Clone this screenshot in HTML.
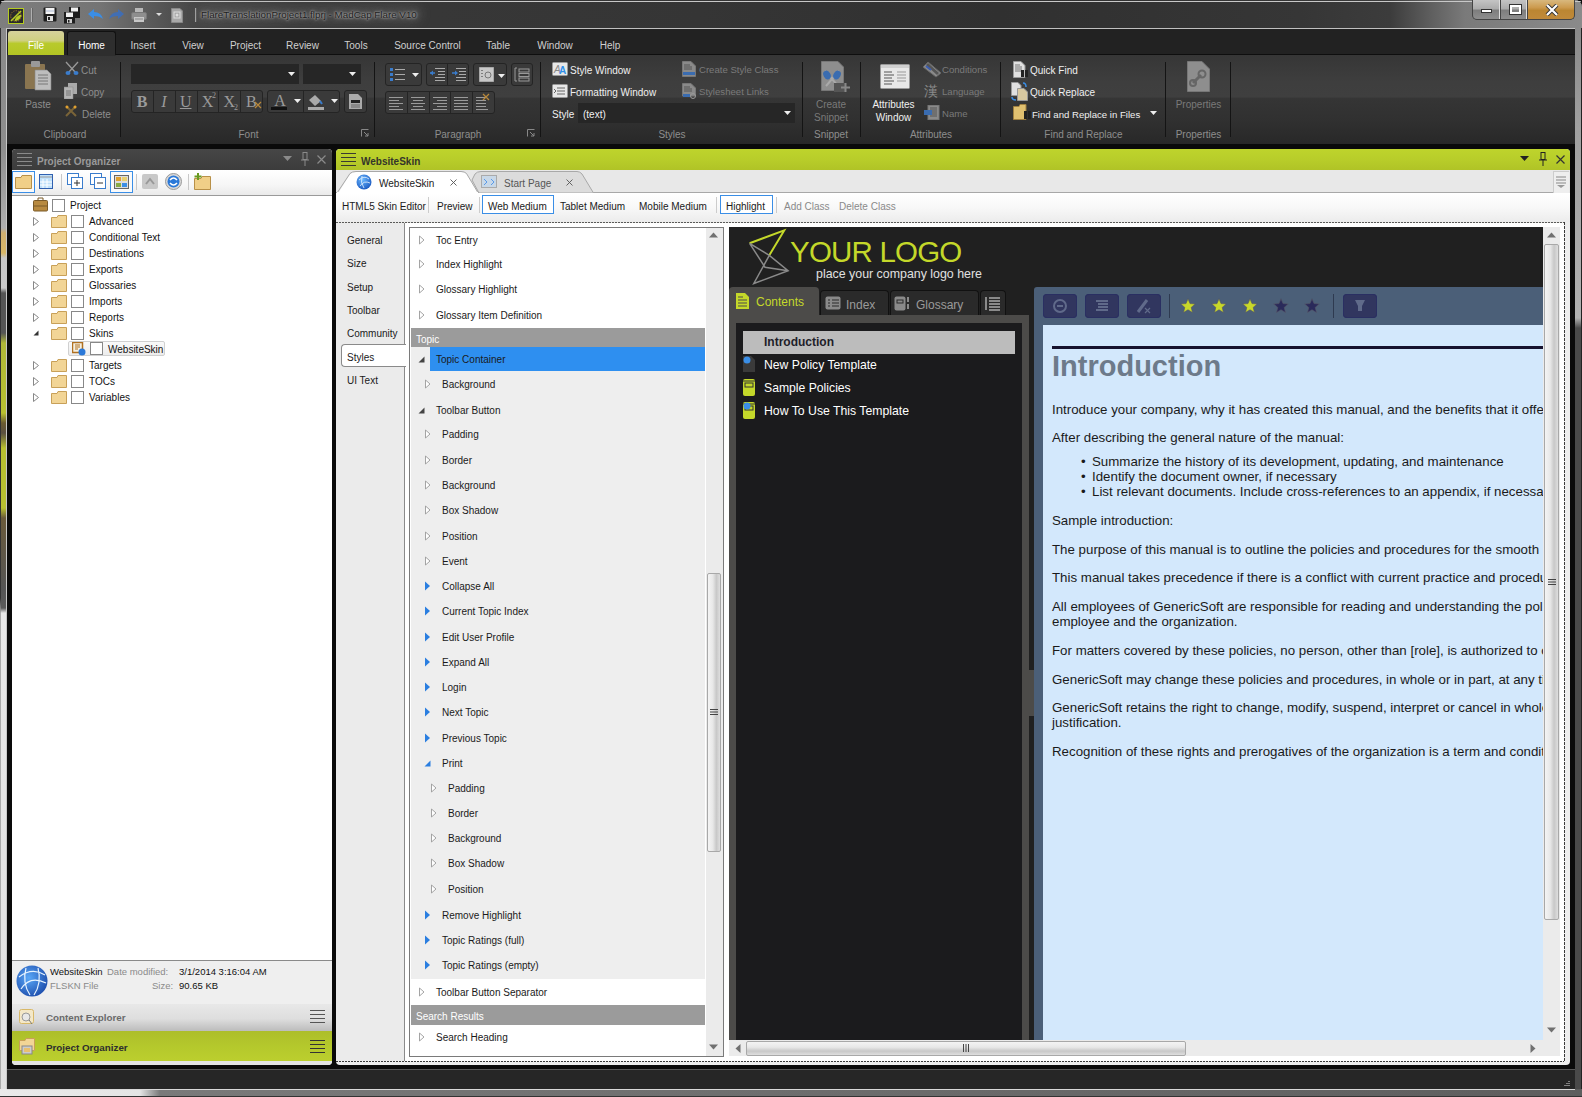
<!DOCTYPE html>
<html><head><meta charset="utf-8">
<style>
*{margin:0;padding:0;box-sizing:border-box}
html,body{width:1582px;height:1097px;overflow:hidden;background:#0c0c0c;font-family:"Liberation Sans",sans-serif}
.a{position:absolute}
.t{position:absolute;white-space:nowrap;line-height:1}
</style></head>
<body>
<div class="a" style="left:0px;top:0px;width:1582px;height:1097px;border-radius:7px 7px 0 0;background:#8a8a8a"></div>
<div class="a" style="left:1px;top:28px;width:6px;height:1069px;background:linear-gradient(180deg,#8a8a8a 0,#8e8e8e 120px,#b0b0b0 200px,#d0b070 205px,#d8b868 225px,#c8c8c8 230px,#cacaca 260px,#555 265px,#555 305px,#b0b838 315px,#b8c030 385px,#6a5a30 395px,#5a5040 405px,#b8c030 420px,#b8c030 480px,#6a5a3a 490px,#555 560px,#5a5a5a 580px,#e8e8e8 585px,#e0e0e0 100%)"></div>
<div class="a" style="left:0px;top:28px;width:1px;height:1069px;background:linear-gradient(180deg,#333 0,#333 570px,#aaa 585px,#aaa 100%)"></div>
<div class="a" style="left:1575px;top:28px;width:7px;height:1069px;background:linear-gradient(180deg,#8a8a8a 0,#a0a0a0 100px,#b0b0b0 290px,#4a4a4a 300px,#4a4a4a 100%)"></div>
<div class="a" style="left:1581px;top:28px;width:1px;height:1069px;background:#222"></div>
<div class="a" style="left:0px;top:0px;width:1582px;height:28px;border-radius:7px 7px 0 0;background:linear-gradient(90deg,#7e7e7e 0,#747474 100px,#5a5a5a 150px,#444 200px,#383838 300px,#353535 700px,#303030 1000px,#363636 1300px,#3c3c3c 1390px,#5e5e5e 1430px,#7a7a7a 1465px,#8a8a8a 1582px)"></div>
<div class="a" style="left:1px;top:1px;width:1580px;height:1px;background:#c8c8c8;border-radius:6px 6px 0 0"></div>
<div class="a" style="left:6px;top:28px;width:1569px;height:1062px;background:#0a0a0a;border-left:1px solid #c8c8c8;border-top:1px solid #c0c0c0"></div>
<div class="a" style="left:8px;top:8px;width:16px;height:16px;background:#2a2a2a;border:1px solid #b5cc22"></div>
<svg class="a" style="left:9px;top:9px" width="14" height="14"><circle cx="7" cy="7" r="5.3" fill="none" stroke="#c88a30" stroke-width=".8" stroke-dasharray="1.2 1.2"/><path d="M12.3 5.5 Q12 11.5 5.5 12.3 Q6 7 12.3 5.5Z" fill="#b8cc26"/><path d="M2 12 L12 2" stroke="#b8cc26" stroke-width="1.6"/></svg>
<div class="a" style="left:31px;top:8px;width:1px;height:14px;background:#b0b0b0;box-shadow:1px 0 0 #666"></div>
<svg class="a" style="left:42px;top:6px" width="16" height="17"><rect x="1.5" y="1.5" width="13" height="14" rx="1" fill="#1e1e1e"/><rect x="3.5" y="2" width="9" height="6" fill="#f4f4f4"/><path d="M4 5h8" stroke="#9ac" stroke-width=".8"/><rect x="5" y="10" width="6" height="5" fill="#ddd"/><rect x="6" y="11" width="2" height="3" fill="#222"/></svg>
<svg class="a" style="left:63px;top:6px" width="18" height="18"><rect x="6" y="1" width="11" height="11" fill="#1e1e1e"/><rect x="8" y="1.5" width="7" height="4" fill="#f0f0f0"/><rect x="1" y="6" width="11" height="11.5" fill="#1e1e1e"/><rect x="3" y="6.5" width="7" height="4.5" fill="#f0f0f0"/><rect x="4" y="13" width="5" height="4" fill="#ccc"/><rect x="5" y="14" width="1.5" height="2.5" fill="#222"/></svg>
<svg class="a" style="left:87px;top:8px" width="17" height="13"><path d="M1 6 L7 1 L7 4 Q14 4 16 11 Q13 8 7 8 L7 11 Z" fill="#3a8ee6"/></svg>
<svg class="a" style="left:108px;top:8px" width="17" height="13"><path d="M16 6 L10 1 L10 4 Q3 4 1 11 Q4 8 10 8 L10 11 Z" fill="#3a6ec0" opacity=".85"/></svg>
<svg class="a" style="left:131px;top:7px" width="16" height="16"><rect x="4" y="1" width="8" height="5" fill="#b8b8b8"/><rect x="0.5" y="5.5" width="15" height="7" rx="1.5" fill="#8e8e8e" stroke="#777"/><rect x="3" y="10" width="10" height="5" fill="#c8c8c8"/><path d="M4 12h8" stroke="#888"/></svg>
<svg class="a" style="left:156px;top:13px" width="6" height="4"><path d="M0 0 L6 0 L3 3 Z" fill="#ddd"/></svg>
<svg class="a" style="left:170px;top:7px" width="14" height="17"><path d="M1.5 1.5H10L12.5 4V15.5H1.5Z" fill="#a8a8a8" stroke="#888"/><rect x="4" y="5" width="6" height="6" fill="none" stroke="#ddd"/><circle cx="7" cy="8" r="1.5" fill="#ddd"/></svg>
<div class="a" style="left:195px;top:8px;width:1px;height:14px;background:#a8a8a8;box-shadow:1px 0 0 #555"></div>
<div class="a" style="left:196px;top:5px;width:226px;height:18px;border-radius:9px;background:rgba(110,110,110,.35);filter:blur(4px)"></div>
<div class="t" style="left:201px;top:10px;font-size:9.8px;color:#1e1e1e;text-shadow:0 0 3px #a8a8a8,0 0 2px #b0b0b0,0 0 6px #777">FlareTranslationProject1.flprj - MadCap Flare V10</div>
<div class="a" style="left:1472px;top:0;width:103px;height:20px;border:1px solid #444;border-top:none;border-radius:0 0 5px 5px;background:#444;overflow:hidden">
 <div class="a" style="left:0;top:0;width:27px;height:19px;background:linear-gradient(180deg,#c4c4c4 0,#acacac 45%,#7e7e7e 55%,#8e8e8e 100%);border-right:1px solid #ddd"></div>
 <div class="a" style="left:28px;top:0;width:26px;height:19px;background:linear-gradient(180deg,#c4c4c4 0,#acacac 45%,#7e7e7e 55%,#8e8e8e 100%);border-right:1px solid #ddd"></div>
 <div class="a" style="left:55px;top:0;width:48px;height:19px;background:linear-gradient(180deg,#d8b87e 0,#cc9a4e 40%,#bb8632 55%,#c08a3a 100%)"></div>
 <div class="a" style="left:8px;top:9px;width:11px;height:4px;background:#fff;border:1px solid #333"></div>
 <div class="a" style="left:37px;top:5px;width:11px;height:9px;border:2px solid #fff;outline:1px solid #333"></div>
 <svg class="a" style="left:72px;top:4px" width="14" height="12"><path d="M2 1 L12 11 M12 1 L2 11" stroke="#333" stroke-width="4"/><path d="M2 1 L12 11 M12 1 L2 11" stroke="#fff" stroke-width="2.2"/></svg>
</div>
<div class="a" style="left:7px;top:29px;width:1568px;height:26px;background:#222"></div>
<div class="a" style="left:8px;top:31px;width:56px;height:24px;border-radius:3px 3px 0 0;background:linear-gradient(180deg,#d6d29c 0,#cfd080 40%,#b8ca2c 52%,#b2c424 100%)"></div>
<div class="t" style="left:8.0px;top:41px;width:56px;text-align:center;font-size:10px;color:#fff;">File</div>
<div class="a" style="left:67px;top:31px;width:49px;height:25px;border-radius:3px 3px 0 0;background:#2e2e2e;border:1px solid #111;border-bottom:none"></div>
<div class="t" style="left:61.5px;top:41px;width:60px;text-align:center;font-size:10px;color:#fff;">Home</div>
<div class="t" style="left:83.0px;top:41px;width:120px;text-align:center;font-size:10px;color:#d0d0d0;">Insert</div>
<div class="t" style="left:133.0px;top:41px;width:120px;text-align:center;font-size:10px;color:#d0d0d0;">View</div>
<div class="t" style="left:185.5px;top:41px;width:120px;text-align:center;font-size:10px;color:#d0d0d0;">Project</div>
<div class="t" style="left:242.5px;top:41px;width:120px;text-align:center;font-size:10px;color:#d0d0d0;">Review</div>
<div class="t" style="left:296.0px;top:41px;width:120px;text-align:center;font-size:10px;color:#d0d0d0;">Tools</div>
<div class="t" style="left:367.5px;top:41px;width:120px;text-align:center;font-size:10px;color:#d0d0d0;">Source Control</div>
<div class="t" style="left:438.0px;top:41px;width:120px;text-align:center;font-size:10px;color:#d0d0d0;">Table</div>
<div class="t" style="left:495.0px;top:41px;width:120px;text-align:center;font-size:10px;color:#d0d0d0;">Window</div>
<div class="t" style="left:550.0px;top:41px;width:120px;text-align:center;font-size:10px;color:#d0d0d0;">Help</div>
<div class="a" style="left:116px;top:54px;width:1459px;height:1px;background:#0e0e0e"></div>
<div class="a" style="left:7px;top:55px;width:1568px;height:89px;background:linear-gradient(180deg,#363636 0,#3e3e3e 30%,#3f3f3f 47%,#353535 49%,#303030 75%,#282828 100%)"></div>
<div class="a" style="left:67px;top:55px;width:49px;height:1px;background:#2e2e2e"></div>
<div class="a" style="left:120px;top:62px;width:1px;height:75px;background:#141414"></div>
<div class="a" style="left:374px;top:62px;width:1px;height:75px;background:#141414"></div>
<div class="a" style="left:540px;top:62px;width:1px;height:75px;background:#141414"></div>
<div class="a" style="left:802px;top:62px;width:1px;height:75px;background:#141414"></div>
<div class="a" style="left:860px;top:62px;width:1px;height:75px;background:#141414"></div>
<div class="a" style="left:1000px;top:62px;width:1px;height:75px;background:#141414"></div>
<div class="a" style="left:1165px;top:62px;width:1px;height:75px;background:#141414"></div>
<div class="a" style="left:1230px;top:62px;width:1px;height:75px;background:#141414"></div>
<div class="t" style="left:-5.0px;top:130px;width:140px;text-align:center;font-size:10px;color:#8e8e8e;">Clipboard</div>
<div class="t" style="left:178.5px;top:130px;width:140px;text-align:center;font-size:10px;color:#8e8e8e;">Font</div>
<div class="t" style="left:388.0px;top:130px;width:140px;text-align:center;font-size:10px;color:#8e8e8e;">Paragraph</div>
<div class="t" style="left:602.0px;top:130px;width:140px;text-align:center;font-size:10px;color:#8e8e8e;">Styles</div>
<div class="t" style="left:761.0px;top:130px;width:140px;text-align:center;font-size:10px;color:#8e8e8e;">Snippet</div>
<div class="t" style="left:861.0px;top:130px;width:140px;text-align:center;font-size:10px;color:#8e8e8e;">Attributes</div>
<div class="t" style="left:1013.5px;top:130px;width:140px;text-align:center;font-size:10px;color:#8e8e8e;">Find and Replace</div>
<div class="t" style="left:1128.5px;top:130px;width:140px;text-align:center;font-size:10px;color:#8e8e8e;">Properties</div>
<svg class="a" style="left:24px;top:61px" width="28" height="30"><rect x="1" y="3" width="20" height="25" rx="1" fill="#8a7550"/><rect x="7" y="0" width="9" height="6" rx="1" fill="#999"/><path d="M11 9 L23 9 L27 13 L27 29 L11 29 Z" fill="#bdbdbd" stroke="#888" stroke-width=".6"/><path d="M14 14h10M14 17h10M14 20h10M14 23h10" stroke="#777" stroke-width="1"/></svg>
<div class="t" style="left:12.0px;top:100px;width:52px;text-align:center;font-size:10px;color:#8e8e8e;">Paste</div>
<svg class="a" style="left:65px;top:61px" width="14" height="14"><path d="M1 1 L10 11 M13 1 L4 11" stroke="#999" stroke-width="1.3"/><ellipse cx="3" cy="12" rx="2.5" ry="2" fill="#3a7ccc"/><ellipse cx="11" cy="12" rx="2.5" ry="2" fill="#3a7ccc"/></svg>
<div class="t" style="left:81px;top:66px;font-size:10px;color:#8e8e8e;">Cut</div>
<svg class="a" style="left:64px;top:83px" width="14" height="16"><rect x="4" y="0" width="9" height="11" fill="#aaa"/><rect x="0" y="4" width="9" height="12" fill="#b5b5b5" stroke="#888" stroke-width=".5"/><path d="M2 8h5M2 10h5M2 12h5" stroke="#777"/></svg>
<div class="t" style="left:81px;top:88px;font-size:10px;color:#8e8e8e;">Copy</div>
<svg class="a" style="left:65px;top:105px" width="12" height="12"><path d="M1 1 L11 11 M11 1 L1 11" stroke="#7a6438" stroke-width="2"/><circle cx="2" cy="2" r="1.5" fill="#e0a030"/><circle cx="10" cy="2" r="1.5" fill="#e0a030"/></svg>
<div class="t" style="left:82px;top:110px;font-size:10px;color:#8e8e8e;">Delete</div>
<div class="a" style="left:131px;top:64px;width:168px;height:20px;background:#262626"></div>
<svg class="a" style="left:288px;top:72px" width="7" height="4"><path d="M0 0h7L3.5 4Z" fill="#eee"/></svg>
<div class="a" style="left:303px;top:64px;width:58px;height:20px;background:#262626"></div>
<svg class="a" style="left:349px;top:72px" width="7" height="4"><path d="M0 0h7L3.5 4Z" fill="#eee"/></svg>
<div class="a" style="left:131px;top:90px;width:132px;height:23px;border:1px solid #242424;border-radius:3px;background:#3a3a3a"></div>
<div class="a" style="left:153px;top:91px;width:1px;height:21px;background:#242424"></div>
<div class="a" style="left:175px;top:91px;width:1px;height:21px;background:#242424"></div>
<div class="a" style="left:197px;top:91px;width:1px;height:21px;background:#242424"></div>
<div class="a" style="left:218px;top:91px;width:1px;height:21px;background:#242424"></div>
<div class="a" style="left:240px;top:91px;width:1px;height:21px;background:#242424"></div>
<div class="t" style="left:132.0px;top:94px;width:20px;text-align:center;font-size:16px;color:#9a9a9a;font-family:'Liberation Serif',serif;font-weight:bold">B</div>
<div class="t" style="left:153.85px;top:94px;width:20px;text-align:center;font-size:16px;color:#9a9a9a;font-family:'Liberation Serif',serif;font-style:italic">I</div>
<div class="t" style="left:175.7px;top:94px;width:20px;text-align:center;font-size:16px;color:#9a9a9a;font-family:'Liberation Serif',serif;text-decoration:underline">U</div>
<div class="t" style="left:197.55px;top:94px;width:20px;text-align:center;font-size:16px;color:#9a9a9a;font-family:'Liberation Serif',serif;">X</div>
<div class="t" style="left:219.4px;top:94px;width:20px;text-align:center;font-size:16px;color:#9a9a9a;font-family:'Liberation Serif',serif;">X</div>
<div class="t" style="left:241.25px;top:94px;width:20px;text-align:center;font-size:16px;color:#9a9a9a;font-family:'Liberation Serif',serif;">B</div>
<div class="t" style="left:212px;top:92px;font-size:8px;color:#9a9a9a;font-family:'Liberation Serif',serif">2</div>
<div class="t" style="left:234px;top:104px;font-size:8px;color:#9a9a9a;font-family:'Liberation Serif',serif">2</div>
<svg class="a" style="left:254px;top:101px" width="8" height="8"><path d="M1 1L7 7M7 1L1 7" stroke="#b8883a" stroke-width="1.2"/></svg>
<div class="a" style="left:267px;top:90px;width:73px;height:23px;border:1px solid #242424;border-radius:3px;background:#3a3a3a"></div>
<div class="a" style="left:303px;top:91px;width:1px;height:21px;background:#242424"></div>
<div class="t" style="left:271.0px;top:93px;width:18px;text-align:center;font-size:16px;color:#9a9a9a;font-family:'Liberation Serif',serif">A</div>
<div class="a" style="left:271px;top:107px;width:16px;height:3px;background:#111"></div>
<svg class="a" style="left:294px;top:99px" width="7" height="4"><path d="M0 0h7L3.5 4Z" fill="#eee"/></svg>
<svg class="a" style="left:306px;top:93px" width="18" height="18"><path d="M3 7 L9 2 L15 8 L9 13 Z" fill="#aaa"/><path d="M14 8 L16 11" stroke="#3a7ccc" stroke-width="2"/><rect x="2" y="14" width="16" height="3" fill="#aaa"/></svg>
<svg class="a" style="left:331px;top:99px" width="7" height="4"><path d="M0 0h7L3.5 4Z" fill="#eee"/></svg>
<div class="a" style="left:344px;top:90px;width:23px;height:23px;border:1px solid #242424;border-radius:3px;background:#3a3a3a"></div>
<svg class="a" style="left:349px;top:94px" width="13" height="15"><path d="M0 0 L9 0 L13 4 L13 15 L0 15 Z" fill="#aaa"/><rect x="2" y="6" width="9" height="3" fill="#222"/><path d="M2 11h9M2 13h9" stroke="#666"/></svg>
<svg class="a" style="left:361px;top:129px" width="8" height="8"><path d="M0.5 7.5 V0.5 H7.5" stroke="#888" fill="none"/><path d="M3 3 L7 7 M7 4 V7 H4" stroke="#888" fill="none"/></svg>
<div class="a" style="left:385px;top:63px;width:37px;height:23px;border:1px solid #242424;border-radius:3px;background:#3a3a3a"></div>
<svg class="a" style="left:390px;top:67px" width="16" height="14"><rect x="0" y="1" width="3" height="3" fill="#3a7ccc"/><rect x="0" y="6" width="3" height="3" fill="#3a7ccc"/><rect x="0" y="11" width="3" height="3" fill="#3a7ccc"/><path d="M5 2.5h10M5 7.5h10M5 12.5h10" stroke="#aaa"/></svg>
<svg class="a" style="left:412px;top:73px" width="7" height="4"><path d="M0 0h7L3.5 4Z" fill="#eee"/></svg>
<div class="a" style="left:426px;top:63px;width:43px;height:23px;border:1px solid #242424;border-radius:3px;background:#3a3a3a"></div>
<div class="a" style="left:447px;top:64px;width:1px;height:21px;background:#242424"></div>
<svg class="a" style="left:430px;top:67px" width="16" height="14"><path d="M5 1.5h10M8 4.5h7M8 7.5h7M5 10.5h10M5 13.5h10" stroke="#aaa"/><path d="M0 6 L5 6" stroke="#3a7ccc" stroke-width="1.5"/><path d="M0 6 L3 3.5 V8.5Z" fill="#3a7ccc"/></svg>
<svg class="a" style="left:451px;top:67px" width="16" height="14"><path d="M5 1.5h10M8 4.5h7M8 7.5h7M5 10.5h10M5 13.5h10" stroke="#aaa"/><path d="M1 6 L6 6" stroke="#3a7ccc" stroke-width="1.5"/><path d="M7 6 L4 3.5 V8.5Z" fill="#3a7ccc"/></svg>
<div class="a" style="left:473px;top:63px;width:34px;height:23px;border:1px solid #242424;border-radius:3px;background:#3a3a3a"></div>
<svg class="a" style="left:479px;top:67px" width="15" height="15"><rect x="0" y="0" width="15" height="15" fill="#c8c8c8" stroke="#888"/><path d="M3 3v9" stroke="#333" stroke-dasharray="1 2"/><circle cx="9" cy="8" r="3" stroke="#777" fill="none"/></svg>
<svg class="a" style="left:498px;top:74px" width="7" height="4"><path d="M0 0h7L3.5 4Z" fill="#eee"/></svg>
<div class="a" style="left:511px;top:63px;width:22px;height:23px;border:1px solid #242424;border-radius:3px;background:#3a3a3a"></div>
<svg class="a" style="left:514px;top:67px" width="16" height="15"><path d="M3 1H1V14H3" stroke="#999" fill="none"/><rect x="5" y="2" width="10" height="3" stroke="#999" fill="none"/><rect x="5" y="6.5" width="10" height="3" stroke="#999" fill="none"/><rect x="5" y="11" width="10" height="3" stroke="#999" fill="none"/></svg>
<div class="a" style="left:385px;top:91px;width:110px;height:23px;border:1px solid #242424;border-radius:3px;background:#3a3a3a"></div>
<div class="a" style="left:407px;top:92px;width:1px;height:21px;background:#242424"></div>
<div class="a" style="left:429px;top:92px;width:1px;height:21px;background:#242424"></div>
<div class="a" style="left:450px;top:92px;width:1px;height:21px;background:#242424"></div>
<div class="a" style="left:472px;top:92px;width:1px;height:21px;background:#242424"></div>
<svg class="a" style="left:389px;top:96px" width="15" height="14"><path d="M0 1.5h14M0 4.5h10M0 7.5h14M0 10.5h10M0 13.5h14" stroke="#9a9a9a"/></svg>
<svg class="a" style="left:411px;top:96px" width="15" height="14"><path d="M0 1.5h14M2 4.5h10M0 7.5h14M2 10.5h10M0 13.5h14" stroke="#9a9a9a"/></svg>
<svg class="a" style="left:433px;top:96px" width="15" height="14"><path d="M0 1.5h14M4 4.5h10M0 7.5h14M4 10.5h10M0 13.5h14" stroke="#9a9a9a"/></svg>
<svg class="a" style="left:454px;top:96px" width="15" height="14"><path d="M0 1.5h14M0 4.5h14M0 7.5h14M0 10.5h14M0 13.5h14" stroke="#9a9a9a"/></svg>
<svg class="a" style="left:476px;top:96px" width="15" height="14"><path d="M0 1.5h10M0 4.5h10M0 7.5h10M0 10.5h10M0 13.5h12" stroke="#9a9a9a"/></svg>
<svg class="a" style="left:482px;top:93px" width="8" height="8"><path d="M1 1L7 7M7 1L1 7" stroke="#b8883a" stroke-width="1.3"/></svg>
<svg class="a" style="left:527px;top:129px" width="8" height="8"><path d="M0.5 7.5 V0.5 H7.5" stroke="#888" fill="none"/><path d="M3 3 L7 7 M7 4 V7 H4" stroke="#888" fill="none"/></svg>
<svg class="a" style="left:552px;top:62px" width="16" height="14"><rect x="0.5" y="0.5" width="15" height="13" rx="1" fill="#e8e8e8" stroke="#999"/><text x="2" y="11" font-family="Liberation Sans" font-size="10" font-style="italic" fill="#888">A</text><text x="7" y="12" font-family="Liberation Sans" font-size="10" font-weight="bold" fill="#2e8ee8">A</text></svg>
<div class="t" style="left:570px;top:66px;font-size:10px;color:#f0f0f0;">Style Window</div>
<svg class="a" style="left:552px;top:84px" width="16" height="14"><rect x="0.5" y="0.5" width="15" height="13" rx="1" fill="#e8e8e8" stroke="#999"/><path d="M5 4h8M5 7h8M5 10h8" stroke="#666"/><path d="M2 5l2 2-2 2" stroke="#666" fill="none"/></svg>
<div class="t" style="left:570px;top:88px;font-size:10px;color:#f0f0f0;">Formatting Window</div>
<svg class="a" style="left:682px;top:61px" width="14" height="16"><path d="M0.5 0.5H9L13.5 5V15.5H0.5Z" fill="#8a8a8a" stroke="#777"/><path d="M2 4h6M2 6h8M2 8h8" stroke="#555"/><rect x="1" y="11" width="12" height="3" fill="#3a6cb0"/></svg>
<div class="t" style="left:699px;top:65px;font-size:9.6px;color:#7a7a7a;">Create Style Class</div>
<svg class="a" style="left:682px;top:83px" width="15" height="16"><path d="M0.5 0.5H9L13.5 5V13H0.5Z" fill="#8a8a8a" stroke="#777"/><path d="M2 4h6M2 6h8M2 8h8" stroke="#555"/><rect x="1" y="11" width="7" height="3" fill="#3a6cb0"/><circle cx="11" cy="13" r="2.5" fill="none" stroke="#999"/></svg>
<div class="t" style="left:699px;top:87px;font-size:9.6px;color:#7a7a7a;">Stylesheet Links</div>
<div class="t" style="left:552px;top:110px;font-size:10px;color:#f0f0f0;">Style</div>
<div class="a" style="left:578px;top:103px;width:217px;height:20px;background:#262626"></div>
<div class="t" style="left:583px;top:110px;font-size:10px;color:#f0f0f0;">(text)</div>
<svg class="a" style="left:784px;top:111px" width="7" height="4"><path d="M0 0h7L3.5 4Z" fill="#eee"/></svg>
<svg class="a" style="left:821px;top:61px" width="30" height="32"><path d="M0.5 0.5H17L22.5 6V29.5H0.5Z" fill="#8e8e8e" stroke="#777"/><path d="M4 10 L17 25 M18 10 L5 25" stroke="#aaa" stroke-width="2"/><ellipse cx="6" cy="14" rx="3.5" ry="4.5" fill="#3a6cb0" transform="rotate(-30 6 14)"/><ellipse cx="16" cy="14" rx="3.5" ry="4.5" fill="#3a6cb0" transform="rotate(30 16 14)"/><rect x="13" y="22" width="12" height="9" fill="#555"/><path d="M20 26.5h9M24.5 22v9" stroke="#888" stroke-width="2"/></svg>
<div class="t" style="left:801.0px;top:98px;width:60px;text-align:center;font-size:10px;color:#7a7a7a;line-height:13px">Create<br>Snippet</div>
<svg class="a" style="left:880px;top:64px" width="30" height="25"><rect x="0.5" y="0.5" width="29" height="24" rx="1" fill="#e8e8e8" stroke="#999"/><rect x="1" y="1" width="28" height="3" fill="#d0d0d0"/><path d="M4 8h8M4 11h10M4 14h8M4 17h10M4 20h8" stroke="#555"/><path d="M17 8h9M17 11h9M17 14h9M17 17h9" stroke="#999"/></svg>
<div class="t" style="left:863.5px;top:98px;width:60px;text-align:center;font-size:10px;color:#f0f0f0;line-height:13px">Attributes<br>Window</div>
<svg class="a" style="left:922px;top:61px" width="20" height="17"><path d="M1 6 L6 1 L19 12 L14 16Z" fill="#8a8a8a" stroke="#666"/><path d="M5 3 L16 13" stroke="#555" stroke-width="3"/><path d="M4 5 L9 9" stroke="#3a5cb0" stroke-width="2"/></svg>
<div class="t" style="left:942px;top:65px;font-size:9.6px;color:#7a7a7a;">Conditions</div>
<div class="t" style="left:924px;top:84px;font-size:14px;color:#8a8a8a;">&#28450;</div>
<div class="t" style="left:942px;top:87px;font-size:9.6px;color:#7a7a7a;">Language</div>
<svg class="a" style="left:924px;top:105px" width="16" height="15"><rect x="4" y="0.5" width="11" height="14" fill="#8a8a8a" stroke="#777"/><path d="M6 3h7M6 5h7M6 7h7M6 9h7M6 11h7" stroke="#555"/><rect x="0" y="5" width="8" height="5" fill="#3a6cb0"/></svg>
<div class="t" style="left:942px;top:109px;font-size:9.6px;color:#7a7a7a;">Name</div>
<svg class="a" style="left:1013px;top:61px" width="16" height="17"><path d="M0.5 0.5H8L12 4.5V16.5H0.5Z" fill="#e0e0e0" stroke="#999"/><path d="M2 4h5M2 6h7M2 8h7M2 10h7" stroke="#777"/><rect x="8" y="9" width="3" height="7" fill="#222"/><rect x="12" y="9" width="3" height="7" fill="#222"/></svg>
<div class="t" style="left:1030px;top:66px;font-size:10px;color:#f0f0f0;">Quick Find</div>
<svg class="a" style="left:1011px;top:82px" width="18" height="19"><path d="M0.5 0.5H7L10 3.5V13.5H0.5Z" fill="#e0e0e0" stroke="#999"/><path d="M6.5 6.5H13L16.5 10V18.5H6.5Z" fill="#d8c8a0" stroke="#999"/><path d="M12 1 Q15 1 15 5" stroke="#3a8ee6" fill="none" stroke-width="1.5"/><path d="M1 15 Q1 18 5 18" stroke="#3a8ee6" fill="none" stroke-width="1.5"/></svg>
<div class="t" style="left:1030px;top:88px;font-size:10px;color:#f0f0f0;">Quick Replace</div>
<svg class="a" style="left:1013px;top:104px" width="20" height="16"><path d="M0.5 2.5H6L7 0.5H13V15.5H0.5Z" fill="#e0c070" stroke="#a08040"/><rect x="11" y="7" width="3" height="8" fill="#222"/><rect x="15" y="7" width="3" height="8" fill="#222"/></svg>
<div class="t" style="left:1032px;top:110px;font-size:9.6px;color:#f0f0f0;">Find and Replace in Files</div>
<svg class="a" style="left:1150px;top:111px" width="7" height="4"><path d="M0 0h7L3.5 4Z" fill="#eee"/></svg>
<svg class="a" style="left:1187px;top:61px" width="23" height="31"><path d="M0.5 0.5H15L22.5 8V30.5H0.5Z" fill="#8e8e8e" stroke="#777"/><path d="M6 22 L14 14" stroke="#666" stroke-width="3"/><circle cx="15" cy="13" r="3.5" fill="none" stroke="#666" stroke-width="2"/><circle cx="6" cy="22" r="3" fill="none" stroke="#666" stroke-width="2"/></svg>
<div class="t" style="left:1168.5px;top:100px;width:60px;text-align:center;font-size:10px;color:#7a7a7a;">Properties</div>
<div class="a" style="left:12px;top:149px;width:320px;height:916px;background:#fff;border-radius:4px"></div>
<div class="a" style="left:12px;top:149px;width:320px;height:21px;border-radius:4px 4px 0 0;background:linear-gradient(180deg,#464646 0,#3c3c3c 100%)"></div>
<svg class="a" style="left:17px;top:153px" width="15" height="13"><path d="M0 0.5h15M0 4.5h15M0 8.5h15M0 12.5h15" stroke="#8a8a8a" stroke-width="1"/></svg>
<div class="t" style="left:37px;top:157px;font-size:10px;color:#9a9a9a;font-weight:bold">Project Organizer</div>
<svg class="a" style="left:283px;top:156px" width="9" height="6"><path d="M0 0h9L4.5 5Z" fill="#8a8a8a"/></svg>
<svg class="a" style="left:301px;top:152px" width="8" height="14"><rect x="2" y="0.5" width="4" height="7" fill="none" stroke="#8a8a8a"/><path d="M0 8h8M4 8v6" stroke="#8a8a8a"/></svg>
<svg class="a" style="left:317px;top:155px" width="9" height="9"><path d="M0.5 0.5L8.5 8.5M8.5 0.5L0.5 8.5" stroke="#8a8a8a" stroke-width="1.2"/></svg>
<div class="a" style="left:12px;top:170px;width:320px;height:26px;background:linear-gradient(180deg,#fff 0,#f6f6f6 60%,#eaeaea 100%);border-bottom:1px solid #9a9a9a"></div>
<div class="a" style="left:12px;top:171px;width:23px;height:22px;border:1px solid #3a8ee6;background:#fafafa"></div>
<svg class="a" style="left:15px;top:175px" width="17" height="14"><path d="M0.5 2.5H6L7 0.5H16.5V13.5H0.5Z" fill="#f0cf88" stroke="#b89048"/></svg>
<svg class="a" style="left:39px;top:174px" width="14" height="15"><rect x="0.5" y="0.5" width="13" height="14" fill="#bfe0fa" stroke="#3060b0"/><path d="M1 3h12" stroke="#999"/><path d="M4 5v9M8 5v9M1 8h12M1 11h12" stroke="#fff"/></svg>
<div class="a" style="left:61px;top:174px;width:1px;height:16px;background:#c8c8c8"></div>
<svg class="a" style="left:67px;top:173px" width="16" height="17"><rect x="0.5" y="0.5" width="11" height="11" fill="#fff" stroke="#3a7ccc"/><rect x="4.5" y="4.5" width="11" height="11" fill="#fff" stroke="#3a7ccc"/><path d="M7 10h6M10 7v6" stroke="#333"/></svg>
<svg class="a" style="left:90px;top:173px" width="16" height="17"><rect x="0.5" y="0.5" width="11" height="11" fill="#fff" stroke="#3a7ccc"/><rect x="4.5" y="4.5" width="11" height="11" fill="#fff" stroke="#3a7ccc"/><path d="M7 10h6" stroke="#333"/></svg>
<div class="a" style="left:110px;top:171px;width:23px;height:22px;border:1px solid #3a8ee6;background:#fafafa"></div>
<svg class="a" style="left:114px;top:175px" width="15" height="14"><rect x="0.5" y="0.5" width="14" height="13" fill="#ddd" stroke="#666"/><rect x="2" y="2" width="5" height="4" fill="#e0a030"/><rect x="8" y="2" width="5" height="4" fill="#e8d070"/><rect x="2" y="8" width="5" height="4" fill="#88aa44"/><rect x="8" y="8" width="5" height="4" fill="#3a8ee6"/></svg>
<div class="a" style="left:136px;top:174px;width:1px;height:16px;background:#c8c8c8"></div>
<svg class="a" style="left:142px;top:174px" width="16" height="15"><rect x="0" y="0" width="16" height="15" rx="2" fill="#c8c8c8"/><path d="M4 10 L8 5 L12 10" stroke="#999" fill="none" stroke-width="2"/></svg>
<svg class="a" style="left:165px;top:173px" width="17" height="17"><circle cx="8.5" cy="8.5" r="8" fill="#d8d8d8" stroke="#999"/><circle cx="8.5" cy="8.5" r="6" fill="#2a78d8"/><path d="M5 7 Q8.5 3 12 7 M12 10 Q8.5 14 5 10" stroke="#fff" fill="none" stroke-width="1.5"/></svg>
<div class="a" style="left:188px;top:174px;width:1px;height:16px;background:#c8c8c8"></div>
<svg class="a" style="left:194px;top:173px" width="17" height="17"><path d="M0.5 5.5H7L8 3.5H16.5V16.5H0.5Z" fill="#f0cf88" stroke="#b89048"/><path d="M4 0v7M0.5 3.5h7" stroke="#6a9a20" stroke-width="2"/></svg>
<svg class="a" style="left:33px;top:197px" width="15" height="15"><rect x="0.5" y="3.5" width="14" height="10.5" rx="1" fill="#b88a40" stroke="#7a5a28"/><path d="M5 3.5V1H10V3.5" stroke="#7a5a28" fill="none"/><path d="M1 9h13" stroke="#7a5a28"/></svg>
<div class="a" style="left:52px;top:199px;width:13px;height:13px;border:1px solid #888;background:#fff"></div>
<div class="t" style="left:70px;top:201px;font-size:10px;color:#111;">Project</div>
<svg class="a" style="left:33px;top:217px" width="6" height="9"><path d="M0.5 0.5L5.5 4.5L0.5 8.5Z" fill="#fff" stroke="#888"/></svg>
<svg class="a" style="left:51px;top:215px" width="16" height="13"><path d="M0.5 2.5H6L7 0.5H15.5V12.5H0.5Z" fill="#f2d596" stroke="#c8a058"/></svg>
<div class="a" style="left:71px;top:215px;width:13px;height:13px;border:1px solid #888;background:#fff"></div>
<div class="t" style="left:89px;top:217px;font-size:10px;color:#111;">Advanced</div>
<svg class="a" style="left:33px;top:233px" width="6" height="9"><path d="M0.5 0.5L5.5 4.5L0.5 8.5Z" fill="#fff" stroke="#888"/></svg>
<svg class="a" style="left:51px;top:231px" width="16" height="13"><path d="M0.5 2.5H6L7 0.5H15.5V12.5H0.5Z" fill="#f2d596" stroke="#c8a058"/></svg>
<div class="a" style="left:71px;top:231px;width:13px;height:13px;border:1px solid #888;background:#fff"></div>
<div class="t" style="left:89px;top:233px;font-size:10px;color:#111;">Conditional Text</div>
<svg class="a" style="left:33px;top:249px" width="6" height="9"><path d="M0.5 0.5L5.5 4.5L0.5 8.5Z" fill="#fff" stroke="#888"/></svg>
<svg class="a" style="left:51px;top:247px" width="16" height="13"><path d="M0.5 2.5H6L7 0.5H15.5V12.5H0.5Z" fill="#f2d596" stroke="#c8a058"/></svg>
<div class="a" style="left:71px;top:247px;width:13px;height:13px;border:1px solid #888;background:#fff"></div>
<div class="t" style="left:89px;top:249px;font-size:10px;color:#111;">Destinations</div>
<svg class="a" style="left:33px;top:265px" width="6" height="9"><path d="M0.5 0.5L5.5 4.5L0.5 8.5Z" fill="#fff" stroke="#888"/></svg>
<svg class="a" style="left:51px;top:263px" width="16" height="13"><path d="M0.5 2.5H6L7 0.5H15.5V12.5H0.5Z" fill="#f2d596" stroke="#c8a058"/></svg>
<div class="a" style="left:71px;top:263px;width:13px;height:13px;border:1px solid #888;background:#fff"></div>
<div class="t" style="left:89px;top:265px;font-size:10px;color:#111;">Exports</div>
<svg class="a" style="left:33px;top:281px" width="6" height="9"><path d="M0.5 0.5L5.5 4.5L0.5 8.5Z" fill="#fff" stroke="#888"/></svg>
<svg class="a" style="left:51px;top:279px" width="16" height="13"><path d="M0.5 2.5H6L7 0.5H15.5V12.5H0.5Z" fill="#f2d596" stroke="#c8a058"/></svg>
<div class="a" style="left:71px;top:279px;width:13px;height:13px;border:1px solid #888;background:#fff"></div>
<div class="t" style="left:89px;top:281px;font-size:10px;color:#111;">Glossaries</div>
<svg class="a" style="left:33px;top:297px" width="6" height="9"><path d="M0.5 0.5L5.5 4.5L0.5 8.5Z" fill="#fff" stroke="#888"/></svg>
<svg class="a" style="left:51px;top:295px" width="16" height="13"><path d="M0.5 2.5H6L7 0.5H15.5V12.5H0.5Z" fill="#f2d596" stroke="#c8a058"/></svg>
<div class="a" style="left:71px;top:295px;width:13px;height:13px;border:1px solid #888;background:#fff"></div>
<div class="t" style="left:89px;top:297px;font-size:10px;color:#111;">Imports</div>
<svg class="a" style="left:33px;top:313px" width="6" height="9"><path d="M0.5 0.5L5.5 4.5L0.5 8.5Z" fill="#fff" stroke="#888"/></svg>
<svg class="a" style="left:51px;top:311px" width="16" height="13"><path d="M0.5 2.5H6L7 0.5H15.5V12.5H0.5Z" fill="#f2d596" stroke="#c8a058"/></svg>
<div class="a" style="left:71px;top:311px;width:13px;height:13px;border:1px solid #888;background:#fff"></div>
<div class="t" style="left:89px;top:313px;font-size:10px;color:#111;">Reports</div>
<svg class="a" style="left:33px;top:330px" width="6" height="6"><path d="M5.5 0.5V5.5H0.5Z" fill="#333"/></svg>
<svg class="a" style="left:51px;top:327px" width="16" height="13"><path d="M0.5 2.5H6L7 0.5H15.5V12.5H0.5Z" fill="#f2d596" stroke="#c8a058"/></svg>
<div class="a" style="left:71px;top:327px;width:13px;height:13px;border:1px solid #888;background:#fff"></div>
<div class="t" style="left:89px;top:329px;font-size:10px;color:#111;">Skins</div>
<svg class="a" style="left:33px;top:361px" width="6" height="9"><path d="M0.5 0.5L5.5 4.5L0.5 8.5Z" fill="#fff" stroke="#888"/></svg>
<svg class="a" style="left:51px;top:359px" width="16" height="13"><path d="M0.5 2.5H6L7 0.5H15.5V12.5H0.5Z" fill="#f2d596" stroke="#c8a058"/></svg>
<div class="a" style="left:71px;top:359px;width:13px;height:13px;border:1px solid #888;background:#fff"></div>
<div class="t" style="left:89px;top:361px;font-size:10px;color:#111;">Targets</div>
<svg class="a" style="left:33px;top:377px" width="6" height="9"><path d="M0.5 0.5L5.5 4.5L0.5 8.5Z" fill="#fff" stroke="#888"/></svg>
<svg class="a" style="left:51px;top:375px" width="16" height="13"><path d="M0.5 2.5H6L7 0.5H15.5V12.5H0.5Z" fill="#f2d596" stroke="#c8a058"/></svg>
<div class="a" style="left:71px;top:375px;width:13px;height:13px;border:1px solid #888;background:#fff"></div>
<div class="t" style="left:89px;top:377px;font-size:10px;color:#111;">TOCs</div>
<svg class="a" style="left:33px;top:393px" width="6" height="9"><path d="M0.5 0.5L5.5 4.5L0.5 8.5Z" fill="#fff" stroke="#888"/></svg>
<svg class="a" style="left:51px;top:391px" width="16" height="13"><path d="M0.5 2.5H6L7 0.5H15.5V12.5H0.5Z" fill="#f2d596" stroke="#c8a058"/></svg>
<div class="a" style="left:71px;top:391px;width:13px;height:13px;border:1px solid #888;background:#fff"></div>
<div class="t" style="left:89px;top:393px;font-size:10px;color:#111;">Variables</div>
<div class="a" style="left:68px;top:341px;width:97px;height:15px;border:1px solid #d0d0d0;border-radius:2px;background:linear-gradient(180deg,#fafafa,#ececec)"></div>
<svg class="a" style="left:72px;top:342px" width="14" height="14"><path d="M0.5 0.5H10.5V10.5H0.5Z" fill="#f6f0e0" stroke="#b07020" stroke-width="1.5"/><path d="M3 3h5M3 5h5M3 7h3" stroke="#b07020"/><circle cx="10" cy="10" r="3.5" fill="#2a78d8"/></svg>
<div class="a" style="left:90px;top:342px;width:13px;height:13px;border:1px solid #888;background:#fff"></div>
<div class="t" style="left:108px;top:345px;font-size:10px;color:#111;">WebsiteSkin</div>
<div class="a" style="left:12px;top:960px;width:320px;height:1px;background:#8a8a8a"></div>
<div class="a" style="left:12px;top:961px;width:320px;height:43px;background:#efefef"></div>
<svg class="a" style="left:16px;top:965px" width="32" height="32"><defs><radialGradient id="gl" cx=".4" cy=".4" r=".7"><stop offset="0" stop-color="#5aa8f8"/><stop offset="1" stop-color="#1a48a8"/></radialGradient></defs><circle cx="16" cy="16" r="15.5" fill="url(#gl)"/><path d="M3 12 Q16 2 29 10 M5 24 Q14 10 30 18 M10 3 Q6 18 14 30 M22 3 Q26 18 18 30" stroke="#e8f4ff" fill="none" stroke-width="1.2"/></svg>
<div class="t" style="left:50px;top:967px;font-size:9.5px;color:#111;">WebsiteSkin</div>
<div class="t" style="left:107px;top:967px;font-size:9.5px;color:#8a8a8a;">Date modified:</div>
<div class="t" style="left:179px;top:967px;font-size:9.5px;color:#111;">3/1/2014 3:16:04 AM</div>
<div class="t" style="left:50px;top:981px;font-size:9.5px;color:#8a8a8a;">FLSKN File</div>
<div class="t" style="left:152px;top:981px;font-size:9.5px;color:#8a8a8a;">Size:</div>
<div class="t" style="left:179px;top:981px;font-size:9.5px;color:#111;">90.65 KB</div>
<div class="a" style="left:12px;top:1004px;width:320px;height:27px;background:linear-gradient(180deg,#e8e8e8 0,#dedede 55%,#bcbcbc 100%)"></div>
<svg class="a" style="left:19px;top:1009px" width="16" height="17"><rect x="0.5" y="0.5" width="14" height="14" rx="2" fill="#f4e8c8" stroke="#d8b868"/><circle cx="7" cy="8" r="4" fill="#e8e8e8" stroke="#999"/><path d="M10 11l3 4" stroke="#777"/></svg>
<div class="t" style="left:46px;top:1013px;font-size:9.8px;color:#6a6a6a;font-weight:bold">Content Explorer</div>
<svg class="a" style="left:310px;top:1010px" width="15" height="14"><path d="M0 0.5h15M0 4.5h15M0 8.5h15M0 12.5h15" stroke="#555"/></svg>
<div class="a" style="left:12px;top:1031px;width:320px;height:30px;background:linear-gradient(180deg,#adbe2a 0,#b4c82c 50%,#bccf2e 100%)"></div>
<svg class="a" style="left:19px;top:1038px" width="16" height="17"><path d="M0.5 2.5H6L7 0.5H15.5V12.5H0.5Z" fill="#f2d596" stroke="#c8a058"/><rect x="3" y="8" width="10" height="8" fill="#ccc" stroke="#888"/><rect x="5" y="10" width="6" height="4" fill="#e8c070"/></svg>
<div class="t" style="left:46px;top:1043px;font-size:9.8px;color:#2e2e2e;font-weight:bold">Project Organizer</div>
<svg class="a" style="left:310px;top:1040px" width="15" height="14"><path d="M0 0.5h15M0 4.5h15M0 8.5h15M0 12.5h15" stroke="#333"/></svg>
<div class="a" style="left:12px;top:1061px;width:320px;height:4px;background:#e4e4e4;border-radius:0 0 4px 4px"></div>
<div class="a" style="left:336px;top:149px;width:1234px;height:916px;background:#eee;border-radius:4px"></div>
<div class="a" style="left:336px;top:149px;width:1234px;height:21px;border-radius:4px 4px 0 0;background:linear-gradient(180deg,#bed42c 0,#b8cd2a 50%,#b0c326 100%)"></div>
<svg class="a" style="left:341px;top:153px" width="15" height="14"><path d="M0 0.5h15M0 4.5h15M0 8.5h15M0 12.5h15" stroke="#3a3a30" stroke-width="1.1"/></svg>
<div class="t" style="left:361px;top:157px;font-size:10px;color:#34342a;font-weight:bold">WebsiteSkin</div>
<svg class="a" style="left:1520px;top:156px" width="9" height="6"><path d="M0 0h9L4.5 5Z" fill="#222"/></svg>
<svg class="a" style="left:1539px;top:152px" width="8" height="14"><rect x="2" y="0.5" width="4" height="7" fill="none" stroke="#222"/><path d="M0 8h8M4 8v6" stroke="#222"/></svg>
<svg class="a" style="left:1556px;top:155px" width="9" height="9"><path d="M0.5 0.5L8.5 8.5M8.5 0.5L0.5 8.5" stroke="#333" stroke-width="1.2"/></svg>
<div class="a" style="left:336px;top:170px;width:1234px;height:23px;background:#e8e8e8"></div>
<div class="a" style="left:336px;top:192px;width:1217px;height:1px;background:#a8a8a8"></div>
<svg class="a" style="left:336px;top:170px" width="270" height="24"><path d="M257.5 23 L246 4 Q244 1.5 241 1.5 L145 1.5 Q141 1.5 139 4 L136 10 L143 23 Z" fill="#dcdcdc" stroke="#a8a8a8"/>
 <path d="M142 23.5 L131 4 Q129 2 125 2 L20 2 Q16 2 14 4 L2 23.5 Z" fill="#fff"/>
 <path d="M142.5 23.5 L130.5 3.5 Q128.5 1.5 125 1.5 L20 1.5 Q16 1.5 14 3.5 L1 23" fill="none" stroke="#a8a8a8"/></svg>
<div class="a" style="left:337px;top:192px;width:141px;height:2px;background:#fff"></div>
<svg class="a" style="left:356px;top:174px" width="16" height="16"><defs><radialGradient id="g2" cx=".4" cy=".35" r=".7"><stop offset="0" stop-color="#6ab8ff"/><stop offset="1" stop-color="#1a58c0"/></radialGradient></defs><circle cx="8" cy="8" r="7.5" fill="url(#g2)"/><path d="M3 6 Q8 1 13 5 M4 12 Q8 6 14 9 M6 2 Q4 9 8 14" stroke="#e8f4ff" fill="none" stroke-width=".8"/></svg>
<div class="t" style="left:379px;top:179px;font-size:10px;color:#1a1a1a;">WebsiteSkin</div>
<svg class="a" style="left:450px;top:179px" width="7" height="7"><path d="M0.5 0.5L6.5 6.5M6.5 0.5L0.5 6.5" stroke="#555" stroke-width="0.9"/></svg>
<svg class="a" style="left:481px;top:175px" width="16" height="13"><rect x="0.5" y="0.5" width="15" height="12" fill="#c8d8e8" stroke="#aaa"/><path d="M3 4l3 3-3 3M10 4l3 3-3 3" stroke="#5a9ae8" fill="none"/></svg>
<div class="t" style="left:504px;top:179px;font-size:10px;color:#555;">Start Page</div>
<svg class="a" style="left:566px;top:179px" width="7" height="7"><path d="M0.5 0.5L6.5 6.5M6.5 0.5L0.5 6.5" stroke="#555" stroke-width="0.9"/></svg>
<div class="a" style="left:1553px;top:171px;width:16px;height:22px;background:#eee;border-left:1px solid #ccc;border-top:1px solid #ccc"></div>
<svg class="a" style="left:1556px;top:176px" width="10" height="12"><path d="M0 1h10M0 4h10M0 7h10" stroke="#888"/><path d="M1 9h8L5 12Z" fill="#999"/></svg>
<div class="a" style="left:336px;top:193px;width:1234px;height:29px;background:linear-gradient(180deg,#fff 0,#f8f8f8 50%,#ececec 100%)"></div>
<div class="t" style="left:342px;top:202px;font-size:10px;color:#1a1a1a;">HTML5 Skin Editor</div>
<div class="a" style="left:428px;top:197px;width:1px;height:16px;background:#ccc"></div>
<div class="t" style="left:437px;top:202px;font-size:10px;color:#1a1a1a;">Preview</div>
<div class="a" style="left:479px;top:197px;width:1px;height:16px;background:#ccc"></div>
<div class="a" style="left:482px;top:195px;width:72px;height:19px;border:1px solid #3a8ee6;background:#fff"></div>
<div class="t" style="left:488px;top:202px;font-size:10px;color:#1a1a1a;">Web Medium</div>
<div class="t" style="left:560px;top:202px;font-size:10px;color:#1a1a1a;">Tablet Medium</div>
<div class="t" style="left:639px;top:202px;font-size:10px;color:#1a1a1a;">Mobile Medium</div>
<div class="a" style="left:716px;top:197px;width:1px;height:16px;background:#ccc"></div>
<div class="a" style="left:720px;top:195px;width:53px;height:19px;border:1px solid #3a8ee6;background:#fff"></div>
<div class="t" style="left:726px;top:202px;font-size:10px;color:#1a1a1a;">Highlight</div>
<div class="a" style="left:776px;top:197px;width:1px;height:16px;background:#ccc"></div>
<div class="t" style="left:784px;top:202px;font-size:10px;color:#8a8a8a;">Add Class</div>
<div class="t" style="left:839px;top:202px;font-size:10px;color:#8a8a8a;">Delete Class</div>
<div class="a" style="left:336px;top:222px;width:1229px;height:840px;background:#fff"></div>
<div class="a" style="left:336px;top:222px;width:1229px;height:1px;background:repeating-linear-gradient(90deg,#5a5a5a 0,#5a5a5a 2px,#e8e8e0 2px,#e8e8e0 3px)"></div>
<div class="a" style="left:336px;top:1061px;width:1229px;height:1px;background:repeating-linear-gradient(90deg,#3a3a3a 0,#3a3a3a 2px,#f0f0f0 2px,#f0f0f0 3px)"></div>
<div class="a" style="left:1564px;top:222px;width:1px;height:840px;background:repeating-linear-gradient(180deg,#3a3a3a 0,#3a3a3a 3px,#f0f0f0 3px,#f0f0f0 4px)"></div>
<div class="a" style="left:336px;top:223px;width:69px;height:838px;background:#ebebeb;border-right:1px solid #8a8a8a"></div>
<div class="a" style="left:341px;top:344px;width:65px;height:23px;background:#fff;border:1px solid #8a8a8a;border-right:none;border-radius:4px 0 0 4px"></div>
<div class="t" style="left:347px;top:236px;font-size:10px;color:#1a1a1a;">General</div>
<div class="t" style="left:347px;top:259px;font-size:10px;color:#1a1a1a;">Size</div>
<div class="t" style="left:347px;top:283px;font-size:10px;color:#1a1a1a;">Setup</div>
<div class="t" style="left:347px;top:306px;font-size:10px;color:#1a1a1a;">Toolbar</div>
<div class="t" style="left:347px;top:329px;font-size:10px;color:#1a1a1a;">Community</div>
<div class="t" style="left:347px;top:353px;font-size:10px;color:#1a1a1a;">Styles</div>
<div class="t" style="left:347px;top:376px;font-size:10px;color:#1a1a1a;">UI Text</div>
<div class="a" style="left:409px;top:227px;width:315px;height:830px;background:#fff;border:1px solid #7a7a7a"></div>
<div class="a" style="left:411px;top:347px;width:294px;height:632px;background:#eeeeee"></div>
<div class="a" style="left:706px;top:228px;width:17px;height:828px;background:#ebebeb"></div>
<svg class="a" style="left:709px;top:232px" width="9" height="6"><path d="M0 5.5 L4.5 0.5 L9 5.5Z" fill="#707070"/></svg>
<svg class="a" style="left:709px;top:1044px" width="9" height="6"><path d="M0 0.5 L4.5 5.5 L9 0.5Z" fill="#707070"/></svg>
<div class="a" style="left:707px;top:573px;width:14px;height:279px;border:1px solid #a8a8a8;border-radius:2px;background:linear-gradient(90deg,#f4f4f4 0,#e8e8e8 40%,#c8c8c8 70%,#dedede 100%)"></div>
<svg class="a" style="left:710px;top:708px" width="8" height="8"><path d="M0 1.5h8M0 4h8M0 6.5h8" stroke="#444"/></svg>
<div class="a" style="left:411px;top:328px;width:294px;height:19px;background:#9b9b9b"></div>
<div class="t" style="left:416px;top:335px;font-size:10px;color:#fff;">Topic</div>
<div class="a" style="left:430px;top:347px;width:275px;height:24px;background:#2e8ff0"></div>
<div class="a" style="left:411px;top:1005px;width:294px;height:20px;background:#9b9b9b"></div>
<div class="t" style="left:416px;top:1012px;font-size:10px;color:#fff;">Search Results</div>
<svg class="a" style="left:419px;top:235px" width="6" height="10"><path d="M0.5 1L5 5L0.5 9Z" fill="#fff" stroke="#9a9a9a" stroke-width=".9"/></svg>
<div class="t" style="left:436px;top:236px;font-size:10px;color:#1a1a1a;">Toc Entry</div>
<svg class="a" style="left:419px;top:259px" width="6" height="10"><path d="M0.5 1L5 5L0.5 9Z" fill="#fff" stroke="#9a9a9a" stroke-width=".9"/></svg>
<div class="t" style="left:436px;top:260px;font-size:10px;color:#1a1a1a;">Index Highlight</div>
<svg class="a" style="left:419px;top:284px" width="6" height="10"><path d="M0.5 1L5 5L0.5 9Z" fill="#fff" stroke="#9a9a9a" stroke-width=".9"/></svg>
<div class="t" style="left:436px;top:285px;font-size:10px;color:#1a1a1a;">Glossary Highlight</div>
<svg class="a" style="left:419px;top:310px" width="6" height="10"><path d="M0.5 1L5 5L0.5 9Z" fill="#fff" stroke="#9a9a9a" stroke-width=".9"/></svg>
<div class="t" style="left:436px;top:311px;font-size:10px;color:#1a1a1a;">Glossary Item Definition</div>
<svg class="a" style="left:418px;top:356px" width="7" height="7"><path d="M6.5 0.5V6.5H0.5Z" fill="#444"/></svg>
<div class="t" style="left:436px;top:355px;font-size:10px;color:#1a1a1a;">Topic Container</div>
<svg class="a" style="left:425px;top:379px" width="6" height="10"><path d="M0.5 1L5 5L0.5 9Z" fill="#fff" stroke="#9a9a9a" stroke-width=".9"/></svg>
<div class="t" style="left:442px;top:380px;font-size:10px;color:#1a1a1a;">Background</div>
<svg class="a" style="left:418px;top:407px" width="7" height="7"><path d="M6.5 0.5V6.5H0.5Z" fill="#444"/></svg>
<div class="t" style="left:436px;top:406px;font-size:10px;color:#1a1a1a;">Toolbar Button</div>
<svg class="a" style="left:425px;top:429px" width="6" height="10"><path d="M0.5 1L5 5L0.5 9Z" fill="#fff" stroke="#9a9a9a" stroke-width=".9"/></svg>
<div class="t" style="left:442px;top:430px;font-size:10px;color:#1a1a1a;">Padding</div>
<svg class="a" style="left:425px;top:455px" width="6" height="10"><path d="M0.5 1L5 5L0.5 9Z" fill="#fff" stroke="#9a9a9a" stroke-width=".9"/></svg>
<div class="t" style="left:442px;top:456px;font-size:10px;color:#1a1a1a;">Border</div>
<svg class="a" style="left:425px;top:480px" width="6" height="10"><path d="M0.5 1L5 5L0.5 9Z" fill="#fff" stroke="#9a9a9a" stroke-width=".9"/></svg>
<div class="t" style="left:442px;top:481px;font-size:10px;color:#1a1a1a;">Background</div>
<svg class="a" style="left:425px;top:505px" width="6" height="10"><path d="M0.5 1L5 5L0.5 9Z" fill="#fff" stroke="#9a9a9a" stroke-width=".9"/></svg>
<div class="t" style="left:442px;top:506px;font-size:10px;color:#1a1a1a;">Box Shadow</div>
<svg class="a" style="left:425px;top:531px" width="6" height="10"><path d="M0.5 1L5 5L0.5 9Z" fill="#fff" stroke="#9a9a9a" stroke-width=".9"/></svg>
<div class="t" style="left:442px;top:532px;font-size:10px;color:#1a1a1a;">Position</div>
<svg class="a" style="left:425px;top:556px" width="6" height="10"><path d="M0.5 1L5 5L0.5 9Z" fill="#fff" stroke="#9a9a9a" stroke-width=".9"/></svg>
<div class="t" style="left:442px;top:557px;font-size:10px;color:#1a1a1a;">Event</div>
<svg class="a" style="left:425px;top:581px" width="6" height="10"><path d="M0 0.5L5 5L0 9.5Z" fill="#2a7ee0"/></svg>
<div class="t" style="left:442px;top:582px;font-size:10px;color:#1a1a1a;">Collapse All</div>
<svg class="a" style="left:425px;top:606px" width="6" height="10"><path d="M0 0.5L5 5L0 9.5Z" fill="#2a7ee0"/></svg>
<div class="t" style="left:442px;top:607px;font-size:10px;color:#1a1a1a;">Current Topic Index</div>
<svg class="a" style="left:425px;top:632px" width="6" height="10"><path d="M0 0.5L5 5L0 9.5Z" fill="#2a7ee0"/></svg>
<div class="t" style="left:442px;top:633px;font-size:10px;color:#1a1a1a;">Edit User Profile</div>
<svg class="a" style="left:425px;top:657px" width="6" height="10"><path d="M0 0.5L5 5L0 9.5Z" fill="#2a7ee0"/></svg>
<div class="t" style="left:442px;top:658px;font-size:10px;color:#1a1a1a;">Expand All</div>
<svg class="a" style="left:425px;top:682px" width="6" height="10"><path d="M0 0.5L5 5L0 9.5Z" fill="#2a7ee0"/></svg>
<div class="t" style="left:442px;top:683px;font-size:10px;color:#1a1a1a;">Login</div>
<svg class="a" style="left:425px;top:707px" width="6" height="10"><path d="M0 0.5L5 5L0 9.5Z" fill="#2a7ee0"/></svg>
<div class="t" style="left:442px;top:708px;font-size:10px;color:#1a1a1a;">Next Topic</div>
<svg class="a" style="left:425px;top:733px" width="6" height="10"><path d="M0 0.5L5 5L0 9.5Z" fill="#2a7ee0"/></svg>
<div class="t" style="left:442px;top:734px;font-size:10px;color:#1a1a1a;">Previous Topic</div>
<svg class="a" style="left:424px;top:760px" width="7" height="7"><path d="M6.5 0.5V6.5H0.5Z" fill="#2a7ee0"/></svg>
<div class="t" style="left:442px;top:759px;font-size:10px;color:#1a1a1a;">Print</div>
<svg class="a" style="left:431px;top:783px" width="6" height="10"><path d="M0.5 1L5 5L0.5 9Z" fill="#fff" stroke="#9a9a9a" stroke-width=".9"/></svg>
<div class="t" style="left:448px;top:784px;font-size:10px;color:#1a1a1a;">Padding</div>
<svg class="a" style="left:431px;top:808px" width="6" height="10"><path d="M0.5 1L5 5L0.5 9Z" fill="#fff" stroke="#9a9a9a" stroke-width=".9"/></svg>
<div class="t" style="left:448px;top:809px;font-size:10px;color:#1a1a1a;">Border</div>
<svg class="a" style="left:431px;top:833px" width="6" height="10"><path d="M0.5 1L5 5L0.5 9Z" fill="#fff" stroke="#9a9a9a" stroke-width=".9"/></svg>
<div class="t" style="left:448px;top:834px;font-size:10px;color:#1a1a1a;">Background</div>
<svg class="a" style="left:431px;top:858px" width="6" height="10"><path d="M0.5 1L5 5L0.5 9Z" fill="#fff" stroke="#9a9a9a" stroke-width=".9"/></svg>
<div class="t" style="left:448px;top:859px;font-size:10px;color:#1a1a1a;">Box Shadow</div>
<svg class="a" style="left:431px;top:884px" width="6" height="10"><path d="M0.5 1L5 5L0.5 9Z" fill="#fff" stroke="#9a9a9a" stroke-width=".9"/></svg>
<div class="t" style="left:448px;top:885px;font-size:10px;color:#1a1a1a;">Position</div>
<svg class="a" style="left:425px;top:910px" width="6" height="10"><path d="M0 0.5L5 5L0 9.5Z" fill="#2a7ee0"/></svg>
<div class="t" style="left:442px;top:911px;font-size:10px;color:#1a1a1a;">Remove Highlight</div>
<svg class="a" style="left:425px;top:935px" width="6" height="10"><path d="M0 0.5L5 5L0 9.5Z" fill="#2a7ee0"/></svg>
<div class="t" style="left:442px;top:936px;font-size:10px;color:#1a1a1a;">Topic Ratings (full)</div>
<svg class="a" style="left:425px;top:960px" width="6" height="10"><path d="M0 0.5L5 5L0 9.5Z" fill="#2a7ee0"/></svg>
<div class="t" style="left:442px;top:961px;font-size:10px;color:#1a1a1a;">Topic Ratings (empty)</div>
<svg class="a" style="left:419px;top:987px" width="6" height="10"><path d="M0.5 1L5 5L0.5 9Z" fill="#fff" stroke="#9a9a9a" stroke-width=".9"/></svg>
<div class="t" style="left:436px;top:988px;font-size:10px;color:#1a1a1a;">Toolbar Button Separator</div>
<svg class="a" style="left:419px;top:1032px" width="6" height="10"><path d="M0.5 1L5 5L0.5 9Z" fill="#fff" stroke="#9a9a9a" stroke-width=".9"/></svg>
<div class="t" style="left:436px;top:1033px;font-size:10px;color:#1a1a1a;">Search Heading</div>
<div class="a" style="left:729px;top:227px;width:814px;height:813px;background:#202020"></div>
<svg class="a" style="left:729px;top:227px" width="270" height="60"><path d="M20.6 16.3 L55.2 3.4 L40.3 28.3" fill="none" stroke="#c4d82a" stroke-width="2"/>
 <path d="M20.6 16.3 L40.3 28.3 L59.1 43.7 L24.8 56.5 L40.3 28.3 M20.6 16.3 L36 40.2 L59.1 43.7" fill="none" stroke="#8a8a8a" stroke-width="1.5"/></svg>
<div class="t" style="left:790px;top:237px;font-size:29.5px;color:#c4d82a;letter-spacing:-0.8px">YOUR LOGO</div>
<div class="t" style="left:816px;top:268px;font-size:12.4px;color:#e0e0e0;">place your company logo here</div>
<div class="a" style="left:729px;top:287px;width:90px;height:29px;background:#4c4b49;border-radius:4px 4px 0 0"></div>
<svg class="a" style="left:736px;top:293px" width="14" height="16"><path d="M0 0H9L13 4V16H0Z" fill="#c4d82a"/><path d="M2 4h5M2 7h9M2 10h9M2 13h9" stroke="#4c4b49" stroke-width="1.2"/></svg>
<div class="t" style="left:756px;top:296px;font-size:12px;color:#c4d82a;">Contents</div>
<div class="a" style="left:820px;top:290px;width:69px;height:26px;background:#2a2a2a;border:1px solid #111;border-bottom:none;border-radius:4px 4px 0 0"></div>
<svg class="a" style="left:825px;top:296px" width="16" height="14"><rect x="0.5" y="0.5" width="15" height="13" rx="2" fill="#8a8a8a"/><path d="M3 4h2M7 4h7M3 7h2M7 7h7M3 10h2M7 10h7" stroke="#2a2a2a" stroke-width="1.2"/></svg>
<div class="t" style="left:846px;top:299px;font-size:12px;color:#9a9a9a;">Index</div>
<div class="a" style="left:890px;top:290px;width:89px;height:26px;background:#2a2a2a;border:1px solid #111;border-bottom:none;border-radius:4px 4px 0 0"></div>
<svg class="a" style="left:894px;top:296px" width="15" height="15"><rect x="0.5" y="0.5" width="11" height="14" rx="2" fill="#8a8a8a"/><rect x="3" y="4" width="6" height="3" fill="none" stroke="#2a2a2a"/><rect x="13" y="1" width="2" height="5" fill="#8a8a8a"/><rect x="13" y="8" width="2" height="5" fill="#8a8a8a"/></svg>
<div class="t" style="left:916px;top:299px;font-size:12px;color:#9a9a9a;">Glossary</div>
<div class="a" style="left:980px;top:290px;width:26px;height:26px;background:#2a2a2a;border:1px solid #111;border-bottom:none;border-radius:4px 4px 0 0"></div>
<svg class="a" style="left:985px;top:296px" width="16" height="15"><path d="M1 1v13" stroke="#8a8a8a" stroke-width="2"/><path d="M4 2h11M4 5h11M4 8h11M4 11h11M4 14h11" stroke="#8a8a8a" stroke-width="2"/></svg>
<div class="a" style="left:729px;top:315px;width:300px;height:725px;background:#4c4b49"></div>
<div class="a" style="left:736px;top:323px;width:286px;height:717px;background:#1b1b1d"></div>
<div class="a" style="left:743px;top:331px;width:272px;height:23px;background:#bcbcbc"></div>
<div class="t" style="left:764px;top:336px;font-size:12px;color:#1e1e2a;font-weight:bold">Introduction</div>
<svg class="a" style="left:743px;top:356px" width="13" height="16"><path d="M0 0H8L12 4V16H0Z" fill="#3a3a3a"/><circle cx="4" cy="4" r="3.5" fill="#3a8ee6"/></svg>
<div class="t" style="left:764px;top:359px;font-size:12.2px;color:#fff;">New Policy Template</div>
<svg class="a" style="left:743px;top:379px" width="13" height="17"><rect x="0" y="0" width="12" height="17" rx="2" fill="#c4d82a"/><rect x="2" y="4" width="8" height="4" fill="none" stroke="#333"/><path d="M0 2h12" stroke="#333"/></svg>
<div class="t" style="left:764px;top:382px;font-size:12.2px;color:#fff;">Sample Policies</div>
<svg class="a" style="left:743px;top:402px" width="13" height="17"><rect x="0" y="0" width="12" height="17" rx="2" fill="#c4d82a"/><rect x="2" y="4" width="8" height="4" fill="none" stroke="#333"/><path d="M0 2h12" stroke="#333"/><circle cx="4" cy="4" r="3.5" fill="#3a8ee6"/></svg>
<div class="t" style="left:764px;top:405px;font-size:12.25px;color:#fff;">How To Use This Template</div>
<div class="a" style="left:1029px;top:670px;width:5px;height:46px;background:#4c4b49"></div>
<div class="a" style="left:1034px;top:287px;width:509px;height:753px;background:#4b5f78;border-radius:3px 0 0 0"></div>
<div class="a" style="left:1043px;top:294px;width:34px;height:24px;border-radius:4px;background:#31365f;box-shadow:inset 0 0 0 1px #2a2f62"></div>
<div class="a" style="left:1085px;top:294px;width:34px;height:24px;border-radius:4px;background:#31365f;box-shadow:inset 0 0 0 1px #2a2f62"></div>
<div class="a" style="left:1127px;top:294px;width:34px;height:24px;border-radius:4px;background:#31365f;box-shadow:inset 0 0 0 1px #2a2f62"></div>
<div class="a" style="left:1343px;top:294px;width:34px;height:24px;border-radius:4px;background:#31365f;box-shadow:inset 0 0 0 1px #2a2f62"></div>
<svg class="a" style="left:1051px;top:298px" width="18" height="16"><circle cx="9" cy="8" r="6" fill="none" stroke="#606a8a" stroke-width="2"/><path d="M6 8h6" stroke="#606a8a" stroke-width="2"/></svg>
<svg class="a" style="left:1093px;top:298px" width="18" height="16"><path d="M3 3h12M5 6h10M5 9h10M3 12h12" stroke="#606a8a" stroke-width="2"/></svg>
<svg class="a" style="left:1135px;top:298px" width="18" height="16"><path d="M3 14 L12 2" stroke="#606a8a" stroke-width="3"/><path d="M10 10l5 5M15 10l-5 5" stroke="#606a8a" stroke-width="1.2"/></svg>
<svg class="a" style="left:1351px;top:298px" width="18" height="16"><path d="M4 2h10L11 8v5H7V8Z" fill="#606a8a"/></svg>
<div class="a" style="left:1169px;top:294px;width:1px;height:24px;background:#2e3a50"></div>
<div class="a" style="left:1333px;top:294px;width:1px;height:24px;background:#2e3a50"></div>
<svg class="a" style="left:1180px;top:298px" width="16" height="16"><path d="M8 0.8 L10 5.6 L15.2 6 L11.2 9.4 L12.5 14.5 L8 11.8 L3.5 14.5 L4.8 9.4 L0.8 6 L6 5.6Z" fill="#c8d82a" stroke="#556" stroke-width=".6"/></svg>
<svg class="a" style="left:1211px;top:298px" width="16" height="16"><path d="M8 0.8 L10 5.6 L15.2 6 L11.2 9.4 L12.5 14.5 L8 11.8 L3.5 14.5 L4.8 9.4 L0.8 6 L6 5.6Z" fill="#c8d82a" stroke="#556" stroke-width=".6"/></svg>
<svg class="a" style="left:1242px;top:298px" width="16" height="16"><path d="M8 0.8 L10 5.6 L15.2 6 L11.2 9.4 L12.5 14.5 L8 11.8 L3.5 14.5 L4.8 9.4 L0.8 6 L6 5.6Z" fill="#c8d82a" stroke="#556" stroke-width=".6"/></svg>
<svg class="a" style="left:1273px;top:298px" width="16" height="16"><path d="M8 0.8 L10 5.6 L15.2 6 L11.2 9.4 L12.5 14.5 L8 11.8 L3.5 14.5 L4.8 9.4 L0.8 6 L6 5.6Z" fill="#2a2a5a" stroke="#556" stroke-width=".6"/></svg>
<svg class="a" style="left:1304px;top:298px" width="16" height="16"><path d="M8 0.8 L10 5.6 L15.2 6 L11.2 9.4 L12.5 14.5 L8 11.8 L3.5 14.5 L4.8 9.4 L0.8 6 L6 5.6Z" fill="#2a2a5a" stroke="#556" stroke-width=".6"/></svg>
<div class="a" style="left:1043px;top:325px;width:500px;height:715px;background:#d3e8fc;overflow:hidden">
 <div class="a" style="left:9px;top:21px;width:500px;height:3px;background:#16122e"></div>
 <div class="t" style="left:9px;top:27px;font-size:29px;font-weight:bold;color:#6d7a8a">Introduction</div>
 <div style="position:absolute;left:9px;top:77px;width:800px;font-size:13.3px;line-height:15px;color:#1a1a1a;white-space:nowrap">
  <p style="position:absolute;top:0">Introduce your company, why it has created this manual, and the benefits that it offers to employees.</p>
  <p style="position:absolute;top:28px">After describing the general nature of the manual:</p>
  <p style="position:absolute;top:52px;left:29px">&#8226;</p>
  <p style="position:absolute;top:52px;left:40px">Summarize the history of its development, updating, and maintenance</p>
  <p style="position:absolute;top:67px;left:29px">&#8226;</p>
  <p style="position:absolute;top:67px;left:40px">Identify the document owner, if necessary</p>
  <p style="position:absolute;top:82px;left:29px">&#8226;</p>
  <p style="position:absolute;top:82px;left:40px">List relevant documents. Include cross-references to an appendix, if necessary.</p>
  <p style="position:absolute;top:111px">Sample introduction:</p>
  <p style="position:absolute;top:140px">The purpose of this manual is to outline the policies and procedures for the smooth running of the organization.</p>
  <p style="position:absolute;top:168px">This manual takes precedence if there is a conflict with current practice and procedures.</p>
  <p style="position:absolute;top:197px">All employees of GenericSoft are responsible for reading and understanding the policies that affect the<br>employee and the organization.</p>
  <p style="position:absolute;top:241px">For matters covered by these policies, no person, other than [role], is authorized to change them.</p>
  <p style="position:absolute;top:270px">GenericSoft may change these policies and procedures, in whole or in part, at any time.</p>
  <p style="position:absolute;top:298px">GenericSoft retains the right to change, modify, suspend, interpret or cancel in whole or in part without notice or<br>justification.</p>
  <p style="position:absolute;top:342px">Recognition of these rights and prerogatives of the organization is a term and condition of employment.</p>
 </div>
</div>
<div class="a" style="left:1543px;top:227px;width:17px;height:829px;background:#ebebeb"></div>
<svg class="a" style="left:1547px;top:232px" width="9" height="6"><path d="M0 5.5 L4.5 0.5 L9 5.5Z" fill="#707070"/></svg>
<svg class="a" style="left:1547px;top:1027px" width="9" height="6"><path d="M0 0.5 L4.5 5.5 L9 0.5Z" fill="#707070"/></svg>
<div class="a" style="left:1544px;top:244px;width:15px;height:676px;border:1px solid #a8a8a8;border-radius:2px;background:linear-gradient(90deg,#f4f4f4 0,#e8e8e8 40%,#c8c8c8 70%,#dedede 100%)"></div>
<svg class="a" style="left:1548px;top:578px" width="8" height="8"><path d="M0 1.5h8M0 4h8M0 6.5h8" stroke="#444"/></svg>
<div class="a" style="left:729px;top:1040px;width:814px;height:16px;background:#ebebeb"></div>
<svg class="a" style="left:735px;top:1044px" width="6" height="9"><path d="M5.5 0 L0.5 4.5 L5.5 9Z" fill="#707070"/></svg>
<svg class="a" style="left:1530px;top:1044px" width="6" height="9"><path d="M0.5 0 L5.5 4.5 L0.5 9Z" fill="#707070"/></svg>
<div class="a" style="left:746px;top:1041px;width:440px;height:15px;border:1px solid #a8a8a8;border-radius:2px;background:linear-gradient(180deg,#f4f4f4 0,#e8e8e8 40%,#c8c8c8 70%,#dedede 100%)"></div>
<svg class="a" style="left:962px;top:1044px" width="8" height="8"><path d="M1.5 0v8M4 0v8M6.5 0v8" stroke="#444"/></svg>
<div class="a" style="left:7px;top:1069px;width:1568px;height:1px;background:#585858"></div>
<div class="a" style="left:7px;top:1070px;width:1568px;height:20px;background:#262626"></div>
<div class="a" style="left:0px;top:1089px;width:1582px;height:8px;background:linear-gradient(90deg,#eaeaea 0,#e4e4e4 140px,#7a7a7a 160px,#5e5e5e 100%)"></div>
<div class="a" style="left:0px;top:1096px;width:1582px;height:1px;background:#333"></div>
<div class="a" style="left:7px;top:1089px;width:1568px;height:1px;background:#d8d8d8"></div>
<svg class="a" style="left:1562px;top:1080px" width="8" height="8"><path d="M7 1v1M5 3v1M7 3v1M3 5v1M5 5v1M7 5v1" stroke="#ddd"/></svg>
</body></html>
